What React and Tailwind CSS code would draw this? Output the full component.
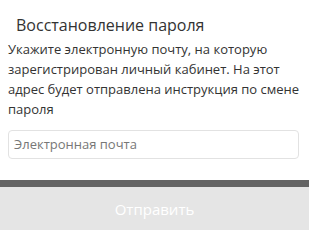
export default function App() {
  return (
    <div className="w-[312px] h-[230px] bg-white overflow-hidden" style={{ fontFamily: '"Open Sans", sans-serif' }}>
      <div className="w-[309px]">
        <h1 className="pt-[13px] pl-[16px] text-[16px] leading-[24px] text-[#333]">Восстановление пароля</h1>
        <p className="px-[8px] mt-[2px] text-[13px] leading-[20px] text-[#333]">
          Укажите электронную почту, на которую зарегистрирован личный кабинет. На этот адрес будет отправлена инструкция по смене пароля
        </p>
        <div className="px-[8px] mt-[11px]">
          <div className="h-[29px] w-[291px] border border-[#e2e2e2] rounded-[4px] flex items-center px-[5px] text-[13px] text-[#777]">
            Электронная почта
          </div>
        </div>
        <div className="mt-[21px] h-[7px] bg-[#646464]" />
        <div className="h-[44px] bg-[#e5e5e5] flex items-center justify-center text-[15px] text-white">
          Отправить
        </div>
      </div>
    </div>
  );
}
